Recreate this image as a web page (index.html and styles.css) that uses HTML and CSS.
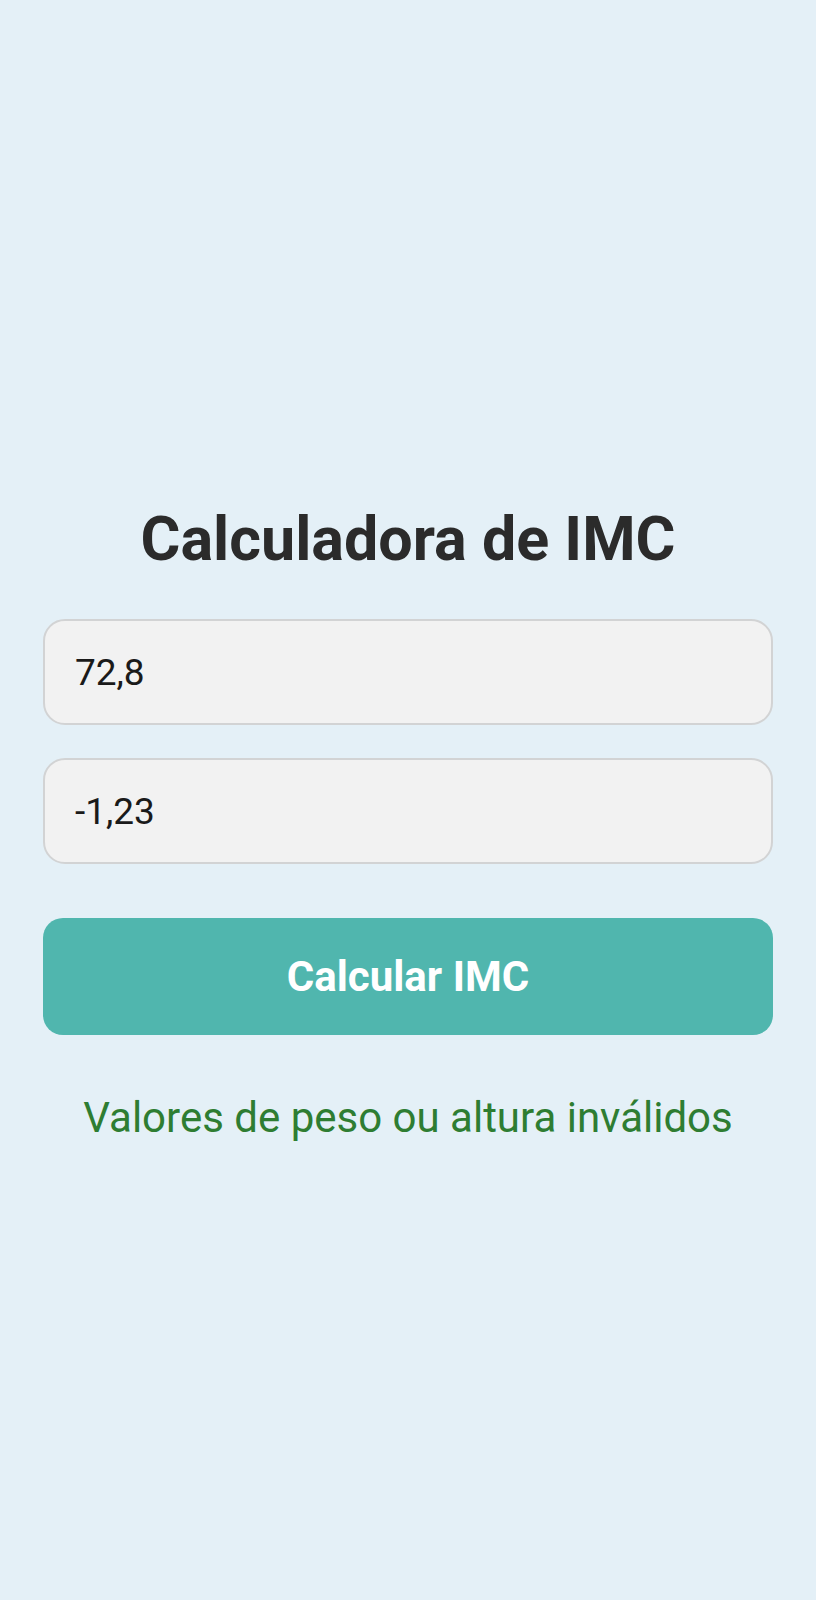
FILE: index.html
```html
<!DOCTYPE html>
<html lang="pt">
<head>
<meta charset="utf-8">
<title>Calculadora de IMC</title>
<link rel="stylesheet" href="styles.css">
</head>
<body>
<main class="screen">
  <h1 class="title">Calculadora de IMC</h1>
  <div class="field">72,8</div>
  <div class="field field-second">-1,23</div>
  <button class="btn" type="button">Calcular IMC</button>
  <p class="message">Valores de peso ou altura inválidos</p>
</main>
</body>
</html>
```

FILE: styles.css
```css
html, body {
  margin: 0;
  padding: 0;
}
body {
  background: #e4f0f7;
  font-family: Roboto, "Noto Sans", "Liberation Sans", sans-serif;
  width: 816px;
  height: 1600px;
}
.screen {
  display: flex;
  flex-direction: column;
  padding: 504px 43px 0 43px;
}
.title {
  margin: 0;
  font-size: 61px;
  font-weight: 700;
  line-height: 70px;
  color: #2b2b2b;
  text-align: center;
}
.field {
  box-sizing: border-box;
  margin-top: 45px;
  height: 106px;
  background: #f2f2f2;
  border: 2px solid #d2d3d4;
  border-radius: 22px;
  padding: 0 30px;
  display: flex;
  align-items: center;
  font-size: 37px;
  color: #1a1a1a;
}
.field-second {
  margin-top: 33px;
}
.btn {
  margin-top: 54px;
  height: 117px;
  border: none;
  border-radius: 20px;
  background: #50b6ae;
  color: #ffffff;
  font-family: Roboto, "Noto Sans", "Liberation Sans", sans-serif;
  font-size: 42px;
  font-weight: 700;
  padding: 0;
}
.message {
  margin: 58px 0 0 0;
  font-size: 42px;
  line-height: 49px;
  color: #2e7d32;
  text-align: center;
}
```
